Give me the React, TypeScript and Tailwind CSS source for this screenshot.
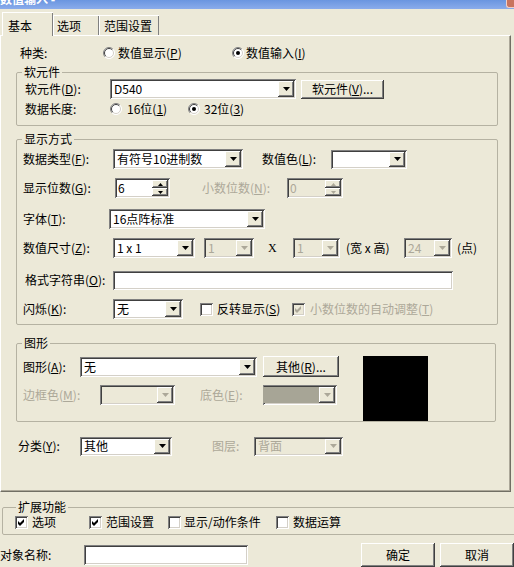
import React from "react";

const SUNKEN =
  "shadow-[inset_1px_1px_0_#808080,inset_-1px_-1px_0_#ffffff,inset_2px_2px_0_#404040,inset_-2px_-2px_0_#d4d0c8]";
const RAISED =
  "shadow-[inset_-1px_-1px_0_#404040,inset_1px_1px_0_#ffffff,inset_-2px_-2px_0_#808080]";
const GRAY = "text-[#aca899]";

function Arrow({ disabled }: { disabled?: boolean }) {
  return (
    <svg width="7" height="4" viewBox="0 0 7 4">
      <path d="M0 0H7L3.5 4Z" fill={disabled ? "#aca899" : "#000"} />
    </svg>
  );
}

function DropBtn({ disabled }: { disabled?: boolean }) {
  return (
    <div className={`w-[16px] h-full shrink-0 bg-[#ece9d8] flex items-center justify-center ${RAISED}`}>
      <Arrow disabled={disabled} />
    </div>
  );
}

function Combo({
  w,
  h = "h-[20px]",
  value,
  disabled,
  fill,
}: {
  w: string;
  h?: string;
  value?: React.ReactNode;
  disabled?: boolean;
  fill?: string;
}) {
  return (
    <div className={`${w} ${h} shrink-0 flex p-[2px] ${disabled ? "bg-[#ece9d8]" : "bg-white"} ${SUNKEN}`}>
      <div
        className={`flex-1 flex items-center pl-[2px] overflow-hidden whitespace-nowrap ${fill ?? ""} ${
          disabled ? GRAY : ""
        }`}
      >
        {value}
      </div>
      <DropBtn disabled={disabled} />
    </div>
  );
}

function Spin({ w, value, disabled }: { w: string; value: string; disabled?: boolean }) {
  const c = disabled ? "#aca899" : "#000";
  return (
    <div className={`${w} h-[20px] shrink-0 flex p-[2px] ${disabled ? "bg-[#ece9d8]" : "bg-white"} ${SUNKEN}`}>
      <div className={`flex-1 flex items-center pl-[1px] ${disabled ? GRAY : ""}`}>{value}</div>
      <div className="w-[16px] flex flex-col">
        <div className={`flex-1 flex items-center justify-center bg-[#ece9d8] ${RAISED}`}>
          <svg width="5" height="3" viewBox="0 0 5 3">
            <path d="M2.5 0L5 3H0Z" fill={c} />
          </svg>
        </div>
        <div className={`flex-1 flex items-center justify-center bg-[#ece9d8] ${RAISED}`}>
          <svg width="5" height="3" viewBox="0 0 5 3">
            <path d="M0 0H5L2.5 3Z" fill={c} />
          </svg>
        </div>
      </div>
    </div>
  );
}

function Input({ w, h = "h-[20px]", value }: { w: string; h?: string; value?: string }) {
  return (
    <div className={`${w} ${h} shrink-0 bg-white flex items-center pl-[4px] ${SUNKEN}`}>{value}</div>
  );
}

function Btn({ w, h, children }: { w: string; h: string; children: React.ReactNode }) {
  return (
    <div className={`${w} ${h} shrink-0 bg-[#ece9d8] flex items-center justify-center ${RAISED}`}>
      {children}
    </div>
  );
}

function Radio({ checked }: { checked?: boolean }) {
  return (
    <svg width="12" height="12" viewBox="0 0 12 12" className="shrink-0">
      <circle cx="6" cy="6" r="5.5" fill="#fff" />
      <path d="M2.1 9.9A5.5 5.5 0 0 1 9.9 2.1" stroke="#808080" fill="none" />
      <path d="M9.9 2.1A5.5 5.5 0 0 1 2.1 9.9" stroke="#ffffff" fill="none" />
      <path d="M2.8 9.2A4.5 4.5 0 0 1 9.2 2.8" stroke="#404040" fill="none" />
      <path d="M9.2 2.8A4.5 4.5 0 0 1 2.8 9.2" stroke="#d4d0c8" fill="none" />
      {checked && <circle cx="6" cy="6" r="2" fill="#000" />}
    </svg>
  );
}

function Check({ checked, disabled }: { checked?: boolean; disabled?: boolean }) {
  return (
    <div
      className={`w-[13px] h-[13px] shrink-0 flex items-center justify-center ${
        disabled ? "bg-[#ece9d8]" : "bg-white"
      } ${SUNKEN}`}
    >
      {checked && (
        <svg width="7" height="7" viewBox="0 0 7 7">
          <path d="M0 2L2 4L6 0V3L2 7L0 5Z" fill={disabled ? "#aca899" : "#000"} />
        </svg>
      )}
    </div>
  );
}

function K({ k }: { k: string }) {
  return (
    <>
      (<span className="underline">{k}</span>)
    </>
  );
}

const FIELDSET = "border border-[#b5b2a2] rounded-[2px]";

export default function App() {
  return (
    <div className="w-[514px] h-[567px] overflow-hidden bg-[#ece9d8] text-[12px] leading-[14px] text-black font-['Noto_Sans_CJK_SC',sans-serif]">
      {/* title bar (cut) */}
      <div className="h-[9px] bg-gradient-to-b from-[#6a95e0] to-[#8aaceb] flex justify-between overflow-hidden">
        <div className="-mt-[8px] text-white font-bold whitespace-nowrap">数值输入 -</div>
        <div className="w-[8px] h-[8px] bg-[#c9745f] rounded-bl-[3px] border-l border-b border-[#f0d0c8]" />
      </div>

      {/* tabs */}
      <div className="h-[26px] flex items-end">
        <div className="relative z-10 -mb-[1px] ml-[2px] w-[51px] h-[24px] pt-[3px] pl-[5px] flex items-center bg-[#ece9d8] border-t border-l border-t-white border-l-white shadow-[inset_-1px_0_0_#808080]">
          基本
        </div>
        <div className="w-[46px] h-[20px] pl-[3px] flex items-center border-t border-l border-t-white border-l-white shadow-[inset_-1px_0_0_#808080]">
          选项
        </div>
        <div className="w-[60px] h-[20px] pl-[4px] flex items-center border-t border-l border-t-white border-l-white shadow-[inset_-1px_0_0_#808080]">
          范围设置
        </div>
      </div>

      {/* panel */}
      <div className="w-[511px] h-[457px] border border-t-white border-l-white border-r-[#716f64] border-b-[#716f64] shadow-[inset_-1px_-1px_0_#aca899]">
        {/* 种类 */}
        <div className="mt-[8px] h-[18px] pl-[19px] flex items-center">
          <span className="w-[83px]">种类:</span>
          <div className="w-[129px] flex items-center">
            <Radio />
            <span className="ml-[3px]">
              数值显示<K k="P" />
            </span>
          </div>
          <div className="flex items-center">
            <Radio checked />
            <span className="ml-[2px]">
              数值输入<K k="I" />
            </span>
          </div>
        </div>

        {/* 软元件 */}
        <fieldset className={`mt-[3px] ml-[15px] w-[482px] pb-[6px] ${FIELDSET}`}>
          <legend className="ml-[5px] px-[2px] leading-[14px]">软元件</legend>
          <div className="h-[20px] pl-[8px] flex items-center">
            <span className="w-[85px]">
              软元件<K k="D" />:
            </span>
            <Combo w="w-[186px]" value="D540" />
            <div className="ml-[5px]">
              <Btn w="w-[83px]" h="h-[19px]">
                软元件<K k="V" />...
              </Btn>
            </div>
          </div>
          <div className="h-[20px] pl-[8px] flex items-center">
            <span className="w-[85px]">数据长度:</span>
            <div className="w-[78px] flex items-center">
              <Radio />
              <span className="ml-[5px]">
                16位<K k="1" />
              </span>
            </div>
            <div className="flex items-center">
              <Radio checked />
              <span className="ml-[4px]">
                32位<K k="3" />
              </span>
            </div>
          </div>
        </fieldset>

        {/* 显示方式 */}
        <fieldset className={`mt-[6px] ml-[15px] w-[482px] pb-[5px] ${FIELDSET}`}>
          <legend className="ml-[5px] px-[2px] leading-[14px]">显示方式</legend>
          <div className="mt-[3px] h-[20px] pl-[6px] flex items-center">
            <span className="w-[90px]">
              数据类型<K k="F" />:
            </span>
            <Combo w="w-[130px]" value="有符号10进制数" />
            <span className="ml-[19px] w-[69px]">
              数值色<K k="L" />:
            </span>
            <Combo w="w-[76px]" h="h-[19px]" />
          </div>
          <div className="mt-[9px] h-[20px] pl-[6px] flex items-center">
            <span className="w-[92px]">
              显示位数<K k="G" />:
            </span>
            <Spin w="w-[55px]" value="6" />
            <span className={`ml-[32px] w-[85px] ${GRAY}`}>
              小数位数<K k="N" />:
            </span>
            <Spin w="w-[56px]" value="0" disabled />
          </div>
          <div className="mt-[11px] h-[20px] pl-[6px] flex items-center">
            <span className="w-[86px]">
              字体<K k="T" />:
            </span>
            <Combo w="w-[156px]" value="16点阵标准" />
          </div>
          <div className="mt-[9px] h-[20px] pl-[6px] flex items-center">
            <span className="w-[90px]">
              数值尺寸<K k="Z" />:
            </span>
            <Combo w="w-[82px]" value="1 x 1" />
            <div className="ml-[9px]">
              <Combo w="w-[50px]" value="1" disabled />
            </div>
            <span className="ml-[14px] w-[25px] font-['Liberation_Serif',serif]">X</span>
            <Combo w="w-[47px]" value="1" disabled />
            <span className="ml-[6px] w-[58px] whitespace-nowrap">(宽 x 高)</span>
            <Combo w="w-[48px]" value="24" disabled />
            <span className="ml-[5px]">(点)</span>
          </div>
          <div className="mt-[12px] h-[20px] pl-[8px] flex items-center">
            <span className="w-[88px]">
              格式字符串<K k="O" />:
            </span>
            <Input w="w-[340px]" h="h-[19px]" />
          </div>
          <div className="mt-[9px] h-[20px] pl-[6px] flex items-center">
            <span className="w-[90px]">
              闪烁<K k="K" />:
            </span>
            <Combo w="w-[70px]" value="无" />
            <div className="ml-[17px] w-[92px] flex items-center">
              <Check />
              <span className="ml-[4px]">
                反转显示<K k="S" />
              </span>
            </div>
            <div className="flex items-center">
              <Check checked disabled />
              <span className={`ml-[5px] ${GRAY}`}>
                小数位数的自动调整<K k="T" />
              </span>
            </div>
          </div>
        </fieldset>

        {/* 图形 */}
        <fieldset className={`mt-[11px] ml-[15px] w-[480px] ${FIELDSET}`}>
          <legend className="ml-[5px] px-[2px] leading-[14px]">图形</legend>
          <div className="flex items-start">
            <div className="flex flex-col">
              <div className="mt-[6px] h-[21px] pl-[6px] flex items-center">
                <span className="w-[57px]">
                  图形<K k="A" />:
                </span>
                <Combo w="w-[177px]" value="无" />
                <div className="ml-[6px]">
                  <Btn w="w-[76px]" h="h-[21px]">
                    其他<K k="R" />...
                  </Btn>
                </div>
              </div>
              <div className="mt-[8px] h-[20px] pl-[6px] flex items-center">
                <span className={`w-[77px] ${GRAY}`}>
                  边框色<K k="M" />:
                </span>
                <Combo w="w-[75px]" disabled />
                <span className={`ml-[25px] w-[63px] ${GRAY}`}>
                  底色<K k="E" />:
                </span>
                <Combo w="w-[74px]" disabled fill="bg-[#a7a596] -ml-[2px]" />
              </div>
            </div>
            <div className="mt-[6px] ml-[24px] w-[65px] h-[65px] bg-black" />
          </div>
        </fieldset>

        {/* 分类 */}
        <div className="mt-[14px] h-[20px] pl-[17px] flex items-center">
          <span className="w-[62px]">
            分类<K k="Y" />:
          </span>
          <Combo w="w-[92px]" h="h-[19px]" value="其他" />
          <span className={`ml-[40px] w-[42px] ${GRAY}`}>图层:</span>
          <Combo w="w-[89px]" h="h-[19px]" value="背面" disabled />
        </div>
      </div>

      {/* 扩展功能 */}
      <fieldset className={`mt-[8px] ml-[2px] w-[530px] pb-[4px] ${FIELDSET}`}>
        <legend className="ml-[13px] px-[2px] leading-[14px]">扩展功能</legend>
        <div className="h-[16px] pl-[12px] flex items-center">
          <div className="w-[74px] flex items-center">
            <Check checked />
            <span className="ml-[4px]">选项</span>
          </div>
          <div className="w-[79px] flex items-center">
            <Check checked />
            <span className="ml-[4px]">范围设置</span>
          </div>
          <div className="w-[108px] flex items-center">
            <Check />
            <span className="ml-[3px]">显示/动作条件</span>
          </div>
          <div className="flex items-center">
            <Check />
            <span className="ml-[4px]">数据运算</span>
          </div>
        </div>
      </fieldset>

      {/* 对象名称 */}
      <div className="mt-[8px] h-[24px] flex items-center">
        <span className="w-[85px]">对象名称:</span>
        <Input w="w-[164px]" />
        <div className="ml-[113px]">
          <Btn w="w-[74px]" h="h-[24px]">确定</Btn>
        </div>
        <div className="ml-[5px]">
          <Btn w="w-[74px]" h="h-[24px]">取消</Btn>
        </div>
      </div>
    </div>
  );
}
